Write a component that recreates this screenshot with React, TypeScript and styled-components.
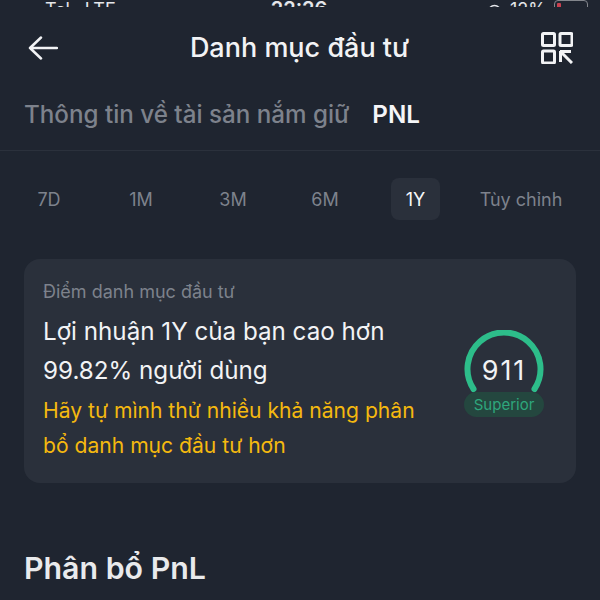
import styled, { createGlobalStyle } from "styled-components";

const Global = createGlobalStyle`
  html, body { margin: 0; padding: 0; background: #1f2530; }
  * { box-sizing: border-box; }
`;

const periods = ["7D", "1M", "3M", "6M", "1Y", "Tùy chỉnh"];

export default function App() {
  return (
    <Page>
      <Global />
      <StatusBar>
        <Carrier>
          <Signal>
            <i /><i /><i /><i />
          </Signal>
          <CarrierName>Tcl</CarrierName>
          <span>LTE</span>
        </Carrier>
        <Clock>22:26</Clock>
        <Battery>
          <AlarmIcon />
          12%
          <BatteryShell />
        </Battery>
      </StatusBar>
      <Header>
        <BackIcon />
        <Title>Danh mục đầu tư</Title>
        <QrIcon />
      </Header>
      <Tabs>
        <Tab>Thông tin về tài sản nắm giữ</Tab>
        <Tab $active>PNL</Tab>
      </Tabs>
      <Periods>
        {periods.map((p) => (
          <Period key={p} $active={p === "1Y"}>{p}</Period>
        ))}
      </Periods>
      <Card>
        <CardText>
          <CardLabel>Điểm danh mục đầu tư</CardLabel>
          <Headline>Lợi nhuận 1Y của bạn cao hơn<br />99.82% người dùng</Headline>
          <Hint>Hãy tự mình thử nhiều khả năng phân<br />bổ danh mục đầu tư hơn</Hint>
        </CardText>
        <Gauge>
          <svg width="80" height="64" viewBox="0 0 80 64">
            <path d="M9.5 59 A36.5 36.5 0 1 1 70.5 59" fill="none" stroke="#2dbd8a" strokeWidth="6" strokeLinecap="round" />
          </svg>
          <Score>911</Score>
          <Badge>Superior</Badge>
        </Gauge>
      </Card>
      <Section>Phân bổ PnL</Section>
    </Page>
  );
}

function AlarmIcon() {
  return (
    <svg width="15" height="15" viewBox="0 0 15 15">
      <circle cx="7.5" cy="7.5" r="6" fill="none" stroke="#e4e6ea" strokeWidth="1.5" />
    </svg>
  );
}

function BackIcon() {
  return (
    <svg width="30" height="26" viewBox="0 0 30 26">
      <path d="M13 2.5 L2 13 L13 23.5 M2 13 H29" fill="none" stroke="#f2f3f5" strokeWidth="2.5" strokeLinecap="round" strokeLinejoin="round" />
    </svg>
  );
}

function QrIcon() {
  return (
    <svg width="32" height="32" viewBox="0 0 32 32" fill="none" stroke="#f2f3f5" strokeWidth="3">
      <rect x="1.5" y="1.5" width="12" height="12" rx="1" />
      <rect x="19" y="1.5" width="12" height="12" rx="1" />
      <rect x="1.5" y="19" width="12" height="12" rx="1" />
      <path d="M19 19.5 H30 M19.5 19 V30 M20 20 L31 31" />
    </svg>
  );
}

const Page = styled.div`
  width: 600px;
  height: 600px;
  overflow: hidden;
  background: #1f2530;
  font-family: Inter, "Noto Sans", sans-serif;
  color: #f2f3f5;
`;

const StatusBar = styled.div`
  height: 7px;
  padding: 0 12px 0 10px;
  display: grid;
  grid-template-columns: 1fr auto 1fr;
  align-items: end;
  overflow: hidden;
  font-size: 18px;
  line-height: 18px;
  color: #e4e6ea;
`;

const Carrier = styled.div`
  display: flex;
  align-items: flex-end;
  height: 18px;
`;

const CarrierName = styled.span`
  margin: 0 15px 0 9px;
`;

const Signal = styled.div`
  display: flex;
  gap: 2px;
  margin-bottom: 1px;
  i {
    display: block;
    width: 5px;
    height: 5px;
    border-radius: 50%;
    background: #f2f3f5;
  }
`;

const Clock = styled.div`
  font-weight: 600;
  font-size: 20px;
  height: 18px;
  margin-bottom: 1px;
`;

const Battery = styled.div`
  display: flex;
  justify-content: flex-end;
  align-items: flex-end;
  gap: 8px;
  height: 18px;
`;

const BatteryShell = styled.div`
  width: 34px;
  height: 18px;
  margin-bottom: 1px;
  padding: 2px;
  border: 1.5px solid #83868c;
  border-radius: 4px;
  &::before {
    content: "";
    display: block;
    width: 4px;
    height: 100%;
    background: #c8404f;
    border-radius: 1px;
  }
`;

const Header = styled.header`
  display: flex;
  align-items: center;
  justify-content: space-between;
  height: 50px;
  margin-top: 16px;
  padding: 0 27px 0 28px;
`;

const Title = styled.h1`
  margin: 0;
  font-size: 27px;
  font-weight: 500;
  line-height: 32px;
`;

const Tabs = styled.nav`
  display: flex;
  align-items: flex-start;
  gap: 23px;
  height: 78px;
  padding: 27px 24px 0;
  border-bottom: 1px solid #2b313c;
`;

const Tab = styled.div<{ $active?: boolean }>`
  font-size: 24.2px;
  line-height: 30px;
  font-weight: ${(p) => (p.$active ? 600 : 500)};
  color: ${(p) => (p.$active ? "#f5f6f8" : "#7d828c")};
`;

const Periods = styled.div`
  display: grid;
  grid-template-columns: repeat(4, 92px) 89px 122px;
  align-items: center;
  justify-items: center;
  margin-top: 27px;
  padding-left: 3px;
`;

const Period = styled.div<{ $active?: boolean }>`
  min-width: 49px;
  height: 42px;
  display: flex;
  align-items: center;
  justify-content: center;
  border-radius: 8px;
  font-size: 18px;
  background: ${(p) => (p.$active ? "#2a303b" : "transparent")};
  color: ${(p) => (p.$active ? "#f5f6f8" : "#7d828c")};
`;

const Card = styled.section`
  display: flex;
  justify-content: space-between;
  align-items: center;
  height: 224px;
  margin: 39px 24px 0;
  padding: 0 32px 0 19px;
  border-radius: 16px;
  background: #2a303b;
`;

const CardText = styled.div`
  display: flex;
  flex-direction: column;
`;

const CardLabel = styled.div`
  font-size: 18px;
  line-height: 24px;
  color: #7d828c;
`;

const Headline = styled.div`
  margin-top: 8px;
  font-size: 24.2px;
  line-height: 39px;
  color: #f2f3f5;
`;

const Hint = styled.div`
  margin-top: 3px;
  font-size: 21.1px;
  line-height: 35px;
  color: #f5b90f;
`;

const Gauge = styled.div`
  position: relative;
  width: 80px;
  height: 88px;
  margin-top: 6px;
  svg { display: block; }
`;

const Score = styled.div`
  position: absolute;
  top: 26px;
  left: 0;
  right: 0;
  text-align: center;
  font-size: 27px;
  line-height: 30px;
  letter-spacing: 2px;
`;

const Badge = styled.div`
  position: absolute;
  left: 0;
  right: 0;
  top: 62px;
  height: 25px;
  border-radius: 13px;
  text-align: center;
  font-size: 15px;
  line-height: 25px;
  color: #2ea67c;
  background: #24473f;
`;

const Section = styled.h2`
  margin: 66px 24px 0;
  font-size: 30.3px;
  line-height: 38px;
  font-weight: 600;
  color: #e9eaec;
`;
